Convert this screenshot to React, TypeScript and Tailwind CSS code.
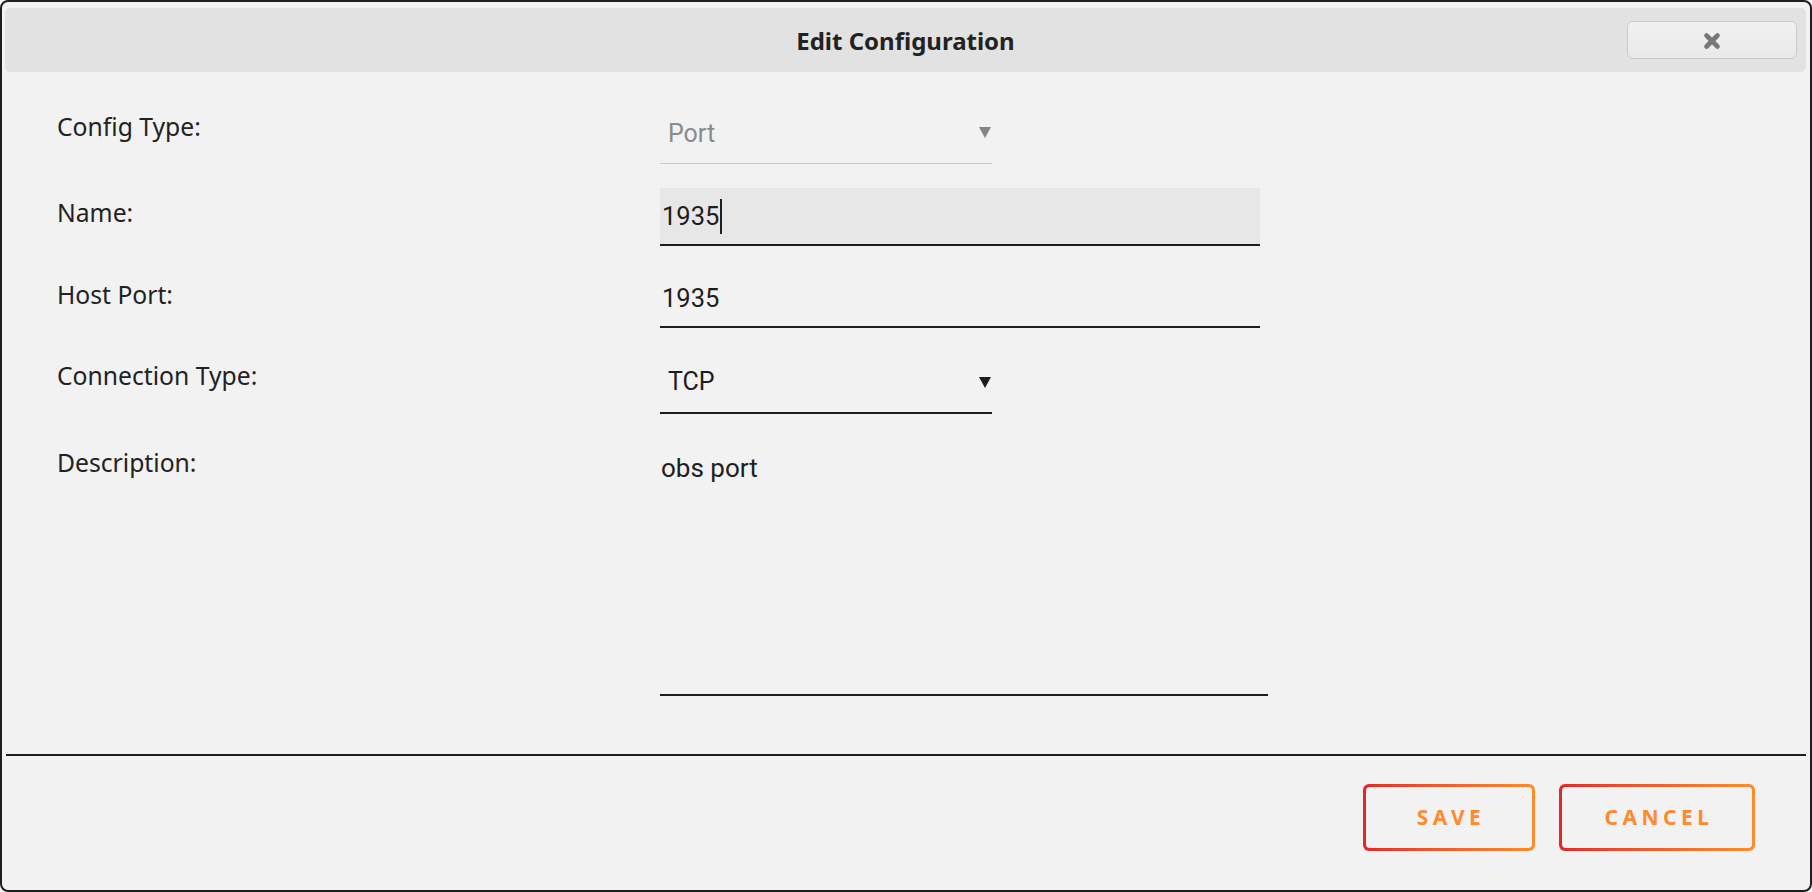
import React from "react";

const labelFont = { fontFamily: "'Noto Sans', sans-serif" } as const;
const valueFont = { fontFamily: "Roboto, sans-serif" } as const;

function Arrow({ color }: { color: string }) {
  return (
    <svg width="12" height="11" viewBox="0 0 12 11" className="shrink-0">
      <polygon points="0,0 12,0 6,11" fill={color} />
    </svg>
  );
}

function GradButton({ label, width }: { label: string; width: string }) {
  return (
    <div className={`${width} h-[67px] rounded-[6px] p-[3px] bg-gradient-to-r from-[#e2262a] to-[#ff8c2c]`}>
      <div className="w-full h-full rounded-[4px] bg-[#f2f2f2] flex items-center justify-center">
        <span
          className="text-[21px] font-bold tracking-[4.5px] text-[#ff8a2e] leading-none pl-[4px]"
          style={labelFont}
        >
          {label}
        </span>
      </div>
    </div>
  );
}

export default function App() {
  return (
    <div className="w-[1812px] h-[892px] bg-white">
      <div className="w-[1812px] h-[892px] border-2 border-[#1e1e1e] rounded-[8px] bg-[#f2f2f2] flex flex-col overflow-hidden">
        {/* Header */}
        <div className="ml-[3px] mr-[4px] mt-[6px] h-[64px] rounded-[5px] bg-[#e2e2e2] grid grid-cols-[1fr_auto_1fr] items-center">
          <div />
          <div className="text-[24px] font-bold text-[#222] leading-none pt-[2px]" style={labelFont}>
            Edit Configuration
          </div>
          <div className="flex justify-end pr-[9px]">
            <div className="w-[170px] h-[38px] rounded-[6px] border border-[#cbcbcb] bg-gradient-to-b from-[#f1f1f1] to-[#e9e9e9] flex items-center justify-center">
              <svg width="18" height="18" viewBox="0 0 18 18" className="mt-[2px]">
                <line x1="3.5" y1="3.5" x2="14.5" y2="14.5" stroke="#787878" strokeWidth="4.6" strokeLinecap="round" />
                <line x1="14.5" y1="3.5" x2="3.5" y2="14.5" stroke="#787878" strokeWidth="4.6" strokeLinecap="round" />
              </svg>
            </div>
          </div>
        </div>

        {/* Form */}
        <div className="pl-[55px] flex flex-col">
          {/* Config Type */}
          <div className="flex items-start h-[92px]">
            <div className="w-[603px] pt-[39px] text-[24.7px] leading-[32px] text-[#222]" style={labelFont}>
              Config Type:
            </div>
            <div className="mt-[47px] w-[332px] pb-[14px] border-b border-[#c8c8c8] flex items-center justify-between pl-[8px] pr-[1px]">
              <span className="text-[25px] leading-[30px] text-[#8a8a8a]" style={valueFont}>Port</span>
              <span className="mb-[4px]"><Arrow color="#858585" /></span>
            </div>
          </div>

          {/* Name */}
          <div className="flex items-start h-[82px]">
            <div className="w-[603px] pt-[33px] text-[24.7px] leading-[32px] text-[#222]" style={labelFont}>
              Name:
            </div>
            <div className="mt-[24px] w-[600px] h-[58px] bg-[#e7e7e7] border-b-2 border-[#1e1e1e] flex items-center pl-[2px]">
              <span className="text-[25.5px] leading-[30px] text-[#1e1e1e]" style={valueFont}>1935</span>
              <span className="w-[2px] h-[35px] bg-[#1e1e1e] ml-[1px]" />
            </div>
          </div>

          {/* Host Port */}
          <div className="flex items-start h-[82px]">
            <div className="w-[603px] pt-[33px] text-[24.7px] leading-[32px] text-[#222]" style={labelFont}>
              Host Port:
            </div>
            <div className="mt-[24px] w-[600px] h-[58px] border-b-2 border-[#1e1e1e] flex items-center pl-[2px]">
              <span className="text-[25.5px] leading-[30px] text-[#1e1e1e]" style={valueFont}>1935</span>
            </div>
          </div>

          {/* Connection Type */}
          <div className="flex items-start h-[86px]">
            <div className="w-[603px] pt-[32px] text-[24.7px] leading-[32px] text-[#222]" style={labelFont}>
              Connection Type:
            </div>
            <div className="mt-[39px] w-[332px] pb-[15px] border-b-2 border-[#1e1e1e] flex items-center justify-between pl-[8px] pr-[1px]">
              <span className="text-[25px] leading-[30px] text-[#1e1e1e]" style={valueFont}>TCP</span>
              <Arrow color="#1e1e1e" />
            </div>
          </div>

          {/* Description */}
          <div className="flex items-start h-[282px]">
            <div className="w-[603px] pt-[33px] text-[24.7px] leading-[32px] text-[#222]" style={labelFont}>
              Description:
            </div>
            <div className="mt-[39px] w-[608px] h-[243px] border-b-2 border-[#1e1e1e] pl-[1px]">
              <span className="text-[26px] leading-[30px] text-[#1e1e1e]" style={valueFont}>obs port</span>
            </div>
          </div>
        </div>

        {/* Separator */}
        <div className="mx-[4px] mt-[58px] h-[2px] bg-[#1e1e1e]" />

        {/* Buttons */}
        <div className="mt-[28px] flex justify-end gap-[24px] pr-[55px]">
          <GradButton label="SAVE" width="w-[172px]" />
          <GradButton label="CANCEL" width="w-[196px]" />
        </div>
      </div>
    </div>
  );
}
